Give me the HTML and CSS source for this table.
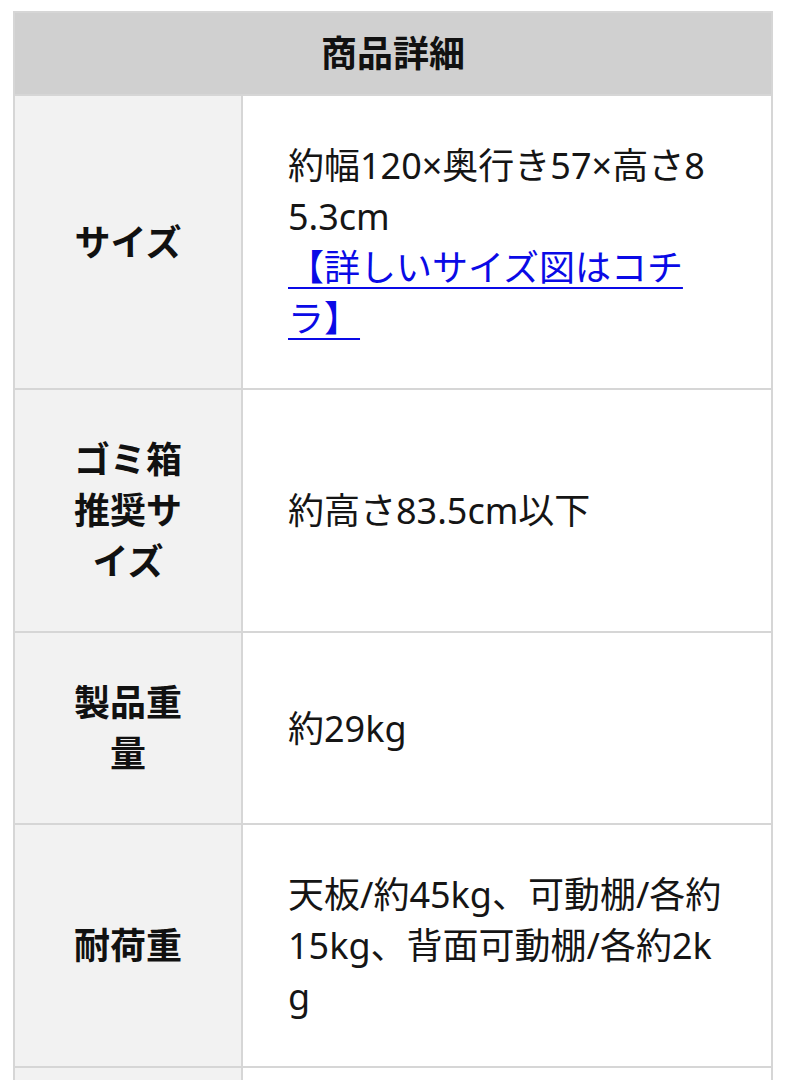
FILE: index.html
```html
<!DOCTYPE html>
<html lang="ja">
<head>
<meta charset="utf-8">
<title>商品詳細</title>
<link rel="stylesheet" href="styles.css">
</head>
<body>
<div class="spec">
  <div class="spec-head">商品詳細</div>

  <div class="spec-label"><span class="cell-text">サイズ</span></div>
  <div class="spec-value"><span class="cell-text">約幅120×奥行き57×高さ85.3cm<br><a href="#" class="spec-link">【詳しいサイズ図はコチラ】</a></span></div>

  <div class="spec-label"><span class="cell-text">ゴミ箱推奨サイズ</span></div>
  <div class="spec-value"><span class="cell-text">約高さ83.5cm以下</span></div>

  <div class="spec-label"><span class="cell-text">製品重量</span></div>
  <div class="spec-value"><span class="cell-text">約29kg</span></div>

  <div class="spec-label"><span class="cell-text">耐荷重</span></div>
  <div class="spec-value"><span class="cell-text">天板/約45kg、可動棚/各約15kg、背面可動棚/各約2kg</span></div>

  <div class="spec-label spec-empty"></div>
  <div class="spec-value spec-empty"></div>
</div>
</body>
</html>
```

FILE: styles.css
```css
html, body {
  margin: 0;
  padding: 0;
  background: #ffffff;
}

body {
  font-family: "Noto Sans", "Noto Sans CJK JP", sans-serif;
  font-size: 36px;
  line-height: 51px;
  color: #151515;
}

.spec {
  margin: 11px 0 0 13px;
  width: 760px;
  box-sizing: border-box;
  display: grid;
  grid-template-columns: 228px 1fr;
  border-top: 2px solid #d6d6d6;
  border-left: 2px solid #d6d6d6;
}

.spec-head {
  grid-column: 1 / 3;
  background: #d0d0d0;
  text-align: center;
  font-weight: 700;
  padding: 15px 0;
  border-right: 2px solid #d6d6d6;
  border-bottom: 2px solid #d6d6d6;
  color: #111111;
}

.spec-label,
.spec-value {
  border-right: 2px solid #d6d6d6;
  border-bottom: 2px solid #d6d6d6;
  display: flex;
  align-items: center;
  word-break: break-all;
}

.cell-text {
  display: block;
}

.spec-label {
  box-sizing: border-box;
  background: #f2f2f2;
  font-weight: 700;
  justify-content: center;
  text-align: center;
  padding: 44px;
  color: #111111;
}

.spec-value {
  padding: 44px 49px 44px 45px;
}

.spec-empty {
  min-height: 120px;
}

.spec-link {
  color: #0a0ae6;
  text-decoration: underline;
  text-decoration-thickness: 2px;
  text-underline-offset: 6px;
}
```
